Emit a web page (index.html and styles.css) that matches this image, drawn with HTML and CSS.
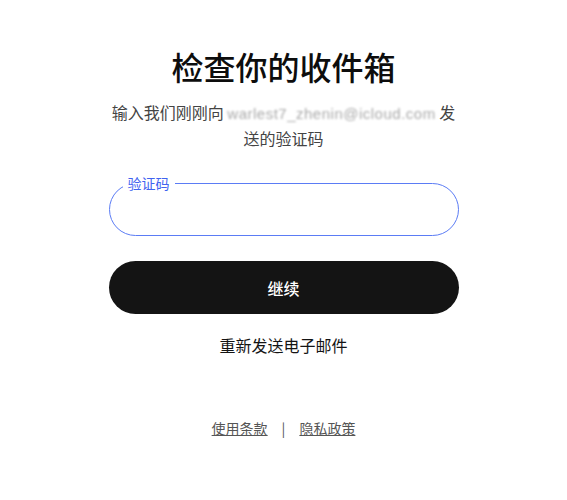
FILE: index.html
```html
<!DOCTYPE html>
<html lang="zh-CN">
<head>
  <meta charset="UTF-8">
  <meta name="viewport" content="width=device-width, initial-scale=1.0">
  <title>检查你的收件箱</title>
  <link rel="stylesheet" href="styles.css">
</head>
<body>
  <main class="card">
    <h1 class="title">检查你的收件箱</h1>
    <p class="subtitle">输入我们刚刚向 <span class="email">warlest7_zhenin@icloud.com</span> 发送的验证码</p>

    <div class="field">
      <label class="field-label" for="code">验证码</label>
      <input type="text" id="code" class="field-input">
    </div>

    <button class="continue">继续</button>

    <a class="resend" href="#">重新发送电子邮件</a>

    <footer class="footer">
      <a href="#">使用条款</a>
      <span class="sep">|</span>
      <a href="#">隐私政策</a>
    </footer>
  </main>
</body>
</html>
```

FILE: styles.css
```css
body {
  margin: 0;
  background: #fff;
  font-family: "Noto Sans CJK SC", "Noto Sans", sans-serif;
  color: #141414;
}

.card {
  width: 350px;
  margin: 0 auto;
  padding-top: 40px;
  display: flex;
  flex-direction: column;
  align-items: center;
}

.title {
  margin: 0;
  font-size: 32px;
  font-weight: 500;
  line-height: 52px;
  color: #0d0d0d;
}

.subtitle {
  margin: 8px 0 0;
  font-size: 16px;
  line-height: 24px;
  color: #444;
  text-align: center;
}

.email {
  color: #aaa;
  filter: blur(1px);
  font-family: "Liberation Sans", sans-serif;
  font-size: 15px;
  letter-spacing: 0.5px;
}

.field {
  position: relative;
  width: 100%;
  margin-top: 33px;
}

.field-label {
  position: absolute;
  left: 14px;
  top: -9px;
  padding: 0 5px;
  background: #fff;
  font-size: 14px;
  line-height: 18px;
  color: #3f63f0;
}

.field-input {
  box-sizing: border-box;
  width: 100%;
  height: 53px;
  border: 1px solid #5b7cf5;
  border-radius: 27px;
  outline: none;
  padding: 0 20px;
  font-size: 16px;
}

.continue {
  width: 100%;
  height: 53px;
  margin-top: 25px;
  border: none;
  border-radius: 27px;
  background: #141414;
  color: #fff;
  font-family: inherit;
  font-size: 16px;
  font-weight: 500;
  cursor: pointer;
}

.resend {
  margin-top: 19px;
  font-size: 16px;
  line-height: 24px;
  color: #141414;
  text-decoration: none;
}

.footer {
  margin-top: 61px;
  display: flex;
  gap: 14px;
  font-size: 14px;
  line-height: 20px;
  color: #555;
}

.footer a {
  color: #555;
  text-decoration: underline;
}
```
